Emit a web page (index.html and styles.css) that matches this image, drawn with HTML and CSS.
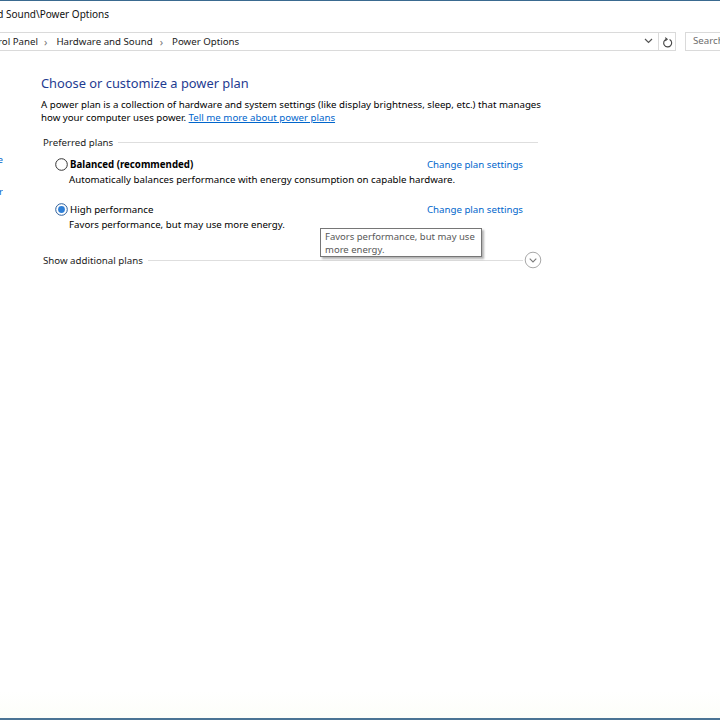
FILE: index.html
```html
<!DOCTYPE html>
<html lang="en">
<head>
  <meta charset="UTF-8" />
  <title>Power Options</title>
  <link rel="stylesheet" href="styles.css">
</head>
<body>
  <div class="window">
    <div class="titlebar">
      <div class="title-clip"><span>Control Panel\Hardware and Sound\Power Options</span></div>
    </div>

    <div class="addressrow">
      <div class="address">
        <div class="crumb-clip"><span>Control Panel</span></div>
        <span class="sep">&rsaquo;</span>
        <span class="crumb">Hardware and Sound</span>
        <span class="sep">&rsaquo;</span>
        <span class="crumb">Power Options</span>
        <span class="drop">
          <svg width="9" height="6" viewBox="0 0 9 6"><path d="M1 1 L4.5 4.5 L8 1" fill="none" stroke="#555" stroke-width="1.2"/></svg>
        </span>
      </div>
      <div class="refresh">
        <svg width="11" height="12" viewBox="0 0 11 12"><path d="M7.6 3.4 A4 4 0 1 1 4.2 3.2" fill="none" stroke="#444" stroke-width="1.1"/><path d="M3.2 1.6 L5.2 3.3 L3.2 4.9" fill="none" stroke="#444" stroke-width="1.1"/></svg>
      </div>
      <div class="search">Search Control Panel</div>
    </div>

    <div class="main">
      <div class="sidebar">
        <a class="side-link">Control Panel Home</a>
        <a class="side-link">Choose what the power</a>
      </div>

      <div class="content">
        <h1>Choose or customize a power plan</h1>
        <p class="intro">A power plan is a collection of hardware and system settings (like display brightness, sleep, etc.) that manages<br>how your computer uses power. <a class="link">Tell me more about power plans</a></p>

        <div class="group">
          <span>Preferred plans</span>
          <span class="rule"></span>
        </div>

        <div class="plan">
          <div class="plan-head">
            <svg class="radio" width="13" height="13" viewBox="0 0 13 13"><circle cx="6.5" cy="6.5" r="5.8" fill="#fff" stroke="#333" stroke-width="1"/></svg>
            <span class="plan-name bold">Balanced (recommended)</span>
            <a class="plan-link">Change plan settings</a>
          </div>
          <div class="plan-desc">Automatically balances performance with energy consumption on capable hardware.</div>
        </div>

        <div class="plan">
          <div class="plan-head">
            <svg class="radio" width="13" height="13" viewBox="0 0 13 13"><circle cx="6.5" cy="6.5" r="5.8" fill="#fff" stroke="#2b5d99" stroke-width="1"/><circle cx="6.5" cy="6.5" r="3.4" fill="#2f7fd6"/></svg>
            <span class="plan-name">High performance</span>
            <a class="plan-link">Change plan settings</a>
          </div>
          <div class="plan-desc">Favors performance, but may use more energy.</div>
        </div>

        <div class="group more">
          <span>Show additional plans</span>
          <span class="rule"></span>
          <svg class="expand" width="18" height="18" viewBox="0 0 18 18"><circle cx="9" cy="9" r="7.8" fill="#fff" stroke="#a8a8a8" stroke-width="1"/><path d="M5.7 7.6 L9 10.9 L12.3 7.6" fill="none" stroke="#7a7a7a" stroke-width="1.1"/></svg>
        </div>

        <div class="tooltip">Favors performance, but may use<br>more energy.</div>
      </div>
    </div>
  </div>
</body>
</html>
```

FILE: styles.css
```css
* {
  margin: 0;
  padding: 0;
  box-sizing: border-box;
}

body {
  font-family: "Noto Sans", "Open Sans", sans-serif;
  font-size: 9.7px;
  color: #000;
  background: #fff;
}

.window {
  height: 720px;
  border-top: 1px solid #3a6a90;
  border-bottom: 2px solid #4a7394;
  background: linear-gradient(#fff 0, #fff 690px, #fcfdf8 720px);
  overflow: hidden;
}

/* title bar */
.titlebar {
  height: 28px;
  display: flex;
  align-items: center;
  padding-bottom: 2px;
}

.title-clip {
  width: 109px;
  display: flex;
  justify-content: flex-end;
  overflow: hidden;
  white-space: nowrap;
  font-size: 10px;
  color: #111;
}

/* address row */
.addressrow {
  display: flex;
  padding: 3px 0;
  height: 25px;
}

.address {
  width: 659px;
  height: 19px;
  display: flex;
  align-items: center;
  padding-bottom: 1px;
  border-top: 1px solid #dadada;
  border-bottom: 1px solid #dadada;
  border-right: 1px solid #dadada;
  white-space: nowrap;
  color: #1a1a1a;
}

.crumb-clip {
  width: 38px;
  display: flex;
  justify-content: flex-end;
  overflow: hidden;
}

.sep {
  color: #777;
  font-size: 11px;
  padding: 0 9px 0 6px;
}

.crumb {
  margin-right: 1px;
}

.drop {
  margin-left: auto;
  margin-right: 5px;
  display: flex;
}

.refresh {
  width: 17px;
  height: 19px;
  display: flex;
  align-items: center;
  justify-content: center;
  border-top: 1px solid #dadada;
  border-bottom: 1px solid #dadada;
  border-right: 1px solid #dadada;
}

.search {
  margin-left: 9px;
  flex: 1;
  height: 19px;
  border: 1px solid #dadada;
  border-right: none;
  padding-left: 7px;
  line-height: 16px;
  color: #6d6d6d;
  white-space: nowrap;
  overflow: hidden;
}

/* main area */
.main {
  display: flex;
  padding-top: 20px;
}

.sidebar {
  width: 3px;
  flex-shrink: 0;
  overflow: hidden;
  display: flex;
  flex-direction: column;
  align-items: flex-end;
  padding-top: 79px;
}

.side-link {
  color: #0066cc;
  white-space: nowrap;
  line-height: 13px;
}

.side-link + .side-link {
  margin-top: 19px;
}

.content {
  position: relative;
  margin-left: 38px;
  width: 501px;
}

h1 {
  font-size: 12.85px;
  font-weight: normal;
  color: #1e3b91;
  line-height: 18px;
  margin-bottom: 6px;
}

.intro {
  line-height: 13px;
  white-space: nowrap;
}

.link {
  color: #0066cc;
  text-decoration: underline;
}

.group {
  display: flex;
  align-items: center;
  margin: 12px 4px 0 2px;
  line-height: 13px;
  color: #1a1a1a;
}

.group .rule {
  flex: 1;
  height: 1px;
  background: #dedede;
  margin-left: 5px;
}

.group.more {
  margin-top: 19px;
  margin-right: 0;
}

.group.more .rule {
  margin-right: 1px;
}

.plan {
  padding: 0 19px 0 14px;
  margin-top: 7px;
}

.plan + .plan {
  margin-top: 14px;
}

.plan-head {
  height: 16px;
  display: flex;
  align-items: center;
}

.radio {
  margin-right: 2px;
}

.bold {
  font-weight: bold;
}

.plan-link {
  margin-left: auto;
  color: #0066cc;
}

.plan-desc {
  padding-left: 14px;
  margin-top: 1px;
  line-height: 14px;
}

.tooltip {
  position: absolute;
  left: 279px;
  top: 154px;
  width: 162px;
  height: 29px;
  padding: 1px 0 0 4px;
  border: 1px solid #767676;
  background: #fff;
  color: #575757;
  font-size: 9.5px;
  line-height: 13px;
  box-shadow: 2px 2px 2px rgba(0, 0, 0, 0.3);
  white-space: nowrap;
}
```
